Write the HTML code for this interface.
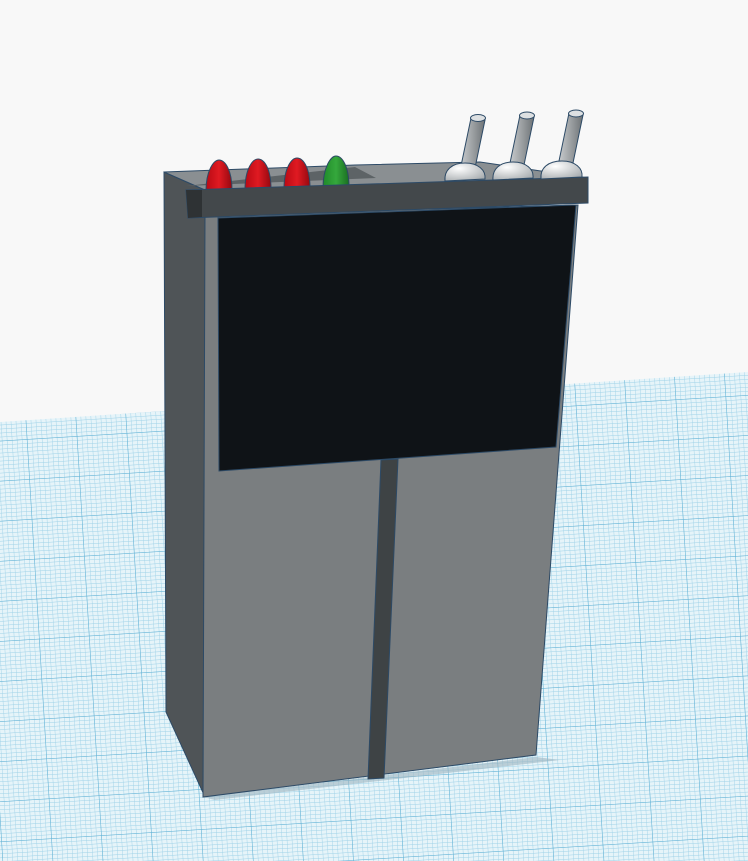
<!DOCTYPE html>
<html><head><style>html,body{margin:0;padding:0;background:#f8f8f8;width:748px;height:861px;overflow:hidden}</style></head>
<body>
<svg width="748" height="861" viewBox="0 0 748 861" xmlns="http://www.w3.org/2000/svg">
<defs>
<pattern id="g" width="5" height="4" patternUnits="userSpaceOnUse" patternTransform="rotate(-3.5)">
<rect width="5" height="4" fill="#e6f4f9"/>
<path d="M0 0H5M0 0V4" stroke="#9fd2e8" stroke-width="0.9"/>
</pattern>
<pattern id="G" width="50" height="40" patternUnits="userSpaceOnUse" patternTransform="rotate(-3.5)">
<path d="M0 0H50M0 0V40" stroke="#5eb0d4" stroke-width="1"/>
</pattern>
<linearGradient id="tg" x1="0" x2="1"><stop offset="0" stop-color="#c8cbcd"/><stop offset="1" stop-color="#6e7376"/></linearGradient>
<radialGradient id="bg" cx="0.35" cy="0.3" r="0.8"><stop offset="0" stop-color="#ffffff"/><stop offset="1" stop-color="#a8adb0"/></radialGradient>
<linearGradient id="rg" x1="0" x2="1"><stop offset="0" stop-color="#b80a14"/><stop offset="0.5" stop-color="#e01a22"/><stop offset="1" stop-color="#950810"/></linearGradient>
<linearGradient id="gg" x1="0" x2="1"><stop offset="0" stop-color="#1f8a2a"/><stop offset="0.5" stop-color="#35a83c"/><stop offset="1" stop-color="#1a6e22"/></linearGradient>
</defs>
<polygon points="0,422 748,372 748,861 0,861" fill="url(#g)"/>
<polygon points="0,422 748,372 748,861 0,861" fill="url(#G)"/>
<polygon points="203,797 536,757 560,760 215,800" fill="#9cb4bf" opacity="0.6"/>
<polygon points="164,172 205,190 205,797 166,712" fill="#4f5457" stroke="#2d4a66" stroke-width="1"/>
<polygon points="205,215 578,205 536,755 203,797" fill="#7a7e80" stroke="#2d4a66" stroke-width="1"/>
<polygon points="164,172 355,165 480,162 588,178 205,190" fill="#8a8f92" stroke="#2d4a66" stroke-width="1"/>
<polygon points="186,186 355,167 376,178" fill="#5d6366"/>
<polygon points="218,218 576,205 556,447 219,471" fill="#0f1317" stroke="#2d4a66" stroke-width="1"/>
<polygon points="381,460 398,459 384,778 368,779" fill="#3e4345" stroke="#2d4a66" stroke-width="1"/>
<g stroke="#2d4a66" stroke-width="1">
<path d="M206,191 C206,170 214,160 219,160 C225,160 232,170 232,190 Z" fill="url(#rg)"/>
<path d="M245,190 C245,168 253,159 258,159 C264,159 271,168 271,189 Z" fill="url(#rg)"/>
<path d="M284,189 C284,167 292,158 297,158 C303,158 310,167 310,188 Z" fill="url(#rg)"/>
<path d="M323,188 C323,167 331,156 336,156 C342,156 349,166 349,187 Z" fill="url(#gg)"/>
</g>
<polygon points="186,190 588,177 588,203 188,218" fill="#43484b" stroke="#2d4a66" stroke-width="1"/>
<polygon points="186,190 202,190 202,217 188,218" fill="#2e3234"/>
<g stroke="#2d4a66" stroke-width="1">
<polygon points="471,118 485,120 475,168 461,166" fill="url(#tg)"/>
<polygon points="520,115 534,117 524,165 510,163" fill="url(#tg)"/>
<polygon points="569,113 583,115 573,163 559,161" fill="url(#tg)"/>
<ellipse cx="478" cy="118" rx="7.5" ry="3.5" fill="#dde0e2"/>
<ellipse cx="527" cy="115.5" rx="7.5" ry="3.5" fill="#dde0e2"/>
<ellipse cx="576" cy="113.5" rx="7.5" ry="3.5" fill="#dde0e2"/>
<path d="M445,181 C444,170 452,163 465,163 C478,163 486,170 485,179 Z" fill="url(#bg)"/>
<path d="M493,180 C492,169 500,162 513,162 C526,162 534,169 533,178 Z" fill="url(#bg)"/>
<path d="M541,179 C540,168 548,161 562,161 C575,161 583,168 582,177 Z" fill="url(#bg)"/>
</g>
</svg>
</body></html>
